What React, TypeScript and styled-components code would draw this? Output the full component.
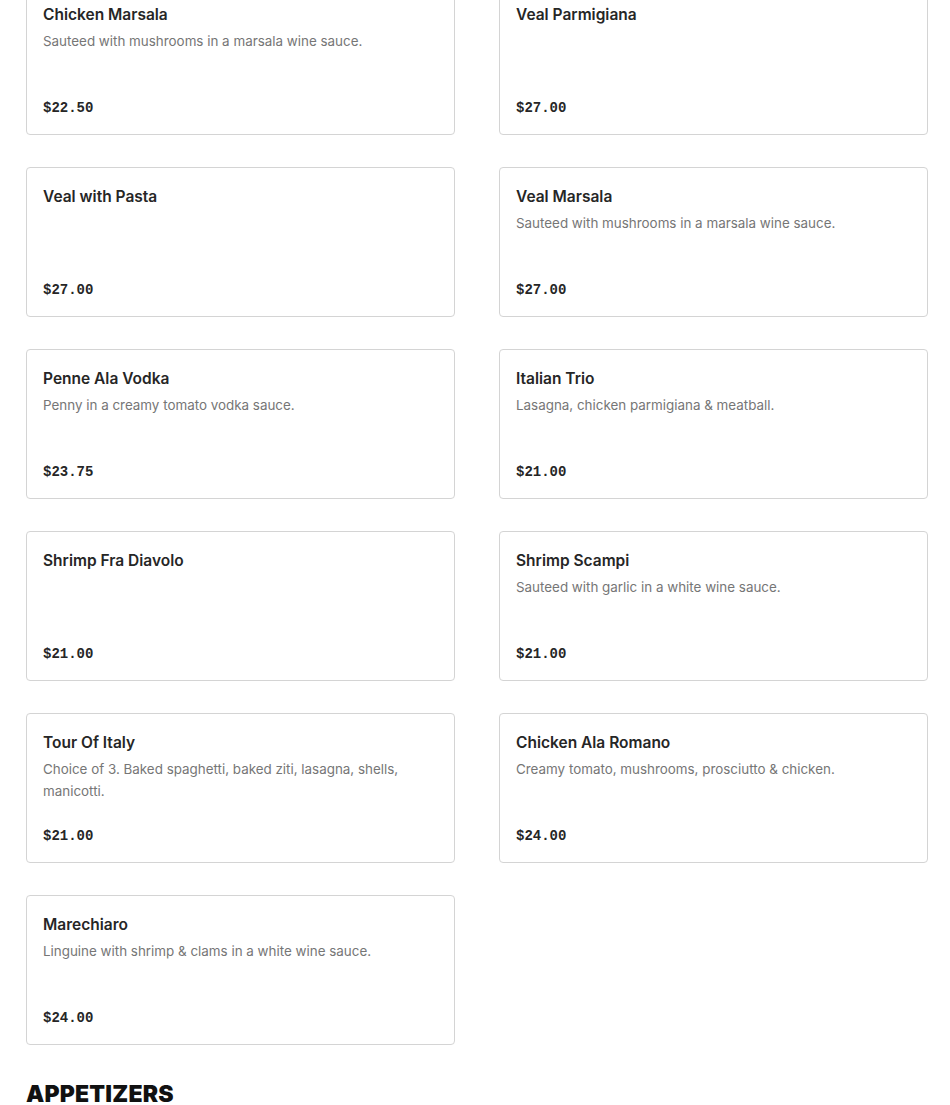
import styled, { createGlobalStyle } from 'styled-components';

const GlobalStyle = createGlobalStyle`
    body {
        margin: 0;
        background: #ffffff;
        font-family: "Inter", "Liberation Sans", sans-serif;
        color: #222222;
    }
`;

const MenuPage = styled.div`
    margin-top: -15px;
    padding: 0 22px 40px 26px;
`;

const ItemGrid = styled.div`
    display: grid;
    grid-template-columns: repeat(2, 429px);
    column-gap: 44px;
    row-gap: 32px;
`;

const ItemCard = styled.div`
    box-sizing: border-box;
    min-height: 150px;
    padding: 17px 16px 15px;
    border: 1px solid #d4d4d4;
    border-radius: 4px;
    background: #fff;
    display: flex;
    flex-direction: column;
`;

const ItemName = styled.div`
    font-size: 15.5px;
    font-weight: 600;
    line-height: 24px;
    color: #262626;
    margin-bottom: 3px;
`;

const ItemDescription = styled.div`
    font-size: 13.4px;
    line-height: 22px;
    color: #767676;
`;

const ItemPrice = styled.div`
    margin-top: auto;
    padding-top: 16px;
    font-family: "Liberation Mono", "DejaVu Sans Mono", monospace;
    font-weight: 700;
    font-size: 14px;
    line-height: 22px;
    color: #262626;
`;

const SectionHeading = styled.h2`
    margin: 34px 0 0;
    font-family: "Inter", "Liberation Sans", sans-serif;
    font-weight: 900;
    font-size: 23px;
    line-height: 30px;
    letter-spacing: 0.2px;
    color: #111;
`;

interface MenuItem {
    name: string;
    description?: string;
    price: string;
}

const items: MenuItem[] = [
    { name: 'Chicken Marsala', description: 'Sauteed with mushrooms in a marsala wine sauce.', price: '$22.50' },
    { name: 'Veal Parmigiana', price: '$27.00' },
    { name: 'Veal with Pasta', price: '$27.00' },
    { name: 'Veal Marsala', description: 'Sauteed with mushrooms in a marsala wine sauce.', price: '$27.00' },
    { name: 'Penne Ala Vodka', description: 'Penny in a creamy tomato vodka sauce.', price: '$23.75' },
    { name: 'Italian Trio', description: 'Lasagna, chicken parmigiana & meatball.', price: '$21.00' },
    { name: 'Shrimp Fra Diavolo', price: '$21.00' },
    { name: 'Shrimp Scampi', description: 'Sauteed with garlic in a white wine sauce.', price: '$21.00' },
    { name: 'Tour Of Italy', description: 'Choice of 3. Baked spaghetti, baked ziti, lasagna, shells, manicotti.', price: '$21.00' },
    { name: 'Chicken Ala Romano', description: 'Creamy tomato, mushrooms, prosciutto & chicken.', price: '$24.00' },
    { name: 'Marechiaro', description: 'Linguine with shrimp & clams in a white wine sauce.', price: '$24.00' },
];

const App = () => {
    return (
        <>
            <GlobalStyle />
            <MenuPage>
                <ItemGrid>
                    {items.map((item) => (
                        <ItemCard key={item.name}>
                            <ItemName>{item.name}</ItemName>
                            {item.description && <ItemDescription>{item.description}</ItemDescription>}
                            <ItemPrice>{item.price}</ItemPrice>
                        </ItemCard>
                    ))}
                </ItemGrid>
                <SectionHeading>APPETIZERS</SectionHeading>
            </MenuPage>
        </>
    );
};

export default App;
